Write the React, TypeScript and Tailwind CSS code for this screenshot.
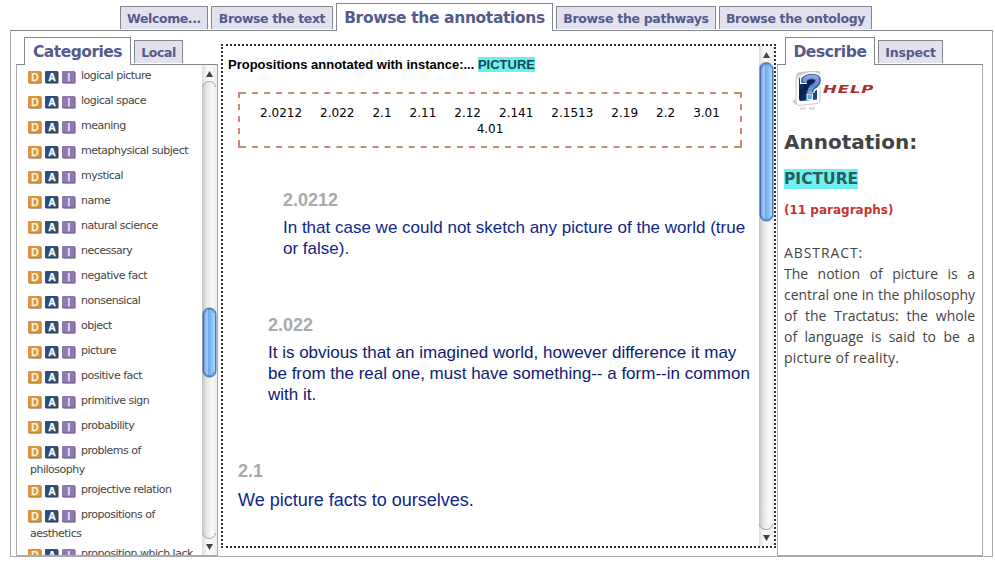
import type { ReactNode } from "react";

const verdana = "font-['Verdana','DejaVu_Sans',sans-serif]";
const arial = "font-['Liberation_Sans',Arial,sans-serif]";

type TabProps = { label: string; width: string; tracking: string; active?: boolean };

function Tab({ label, width, tracking, active }: TabProps) {
  return active ? (
    <button
      className={`relative -mb-px flex h-7 shrink-0 items-center justify-center border border-b-0 border-[#85858d] bg-white pt-[2px] text-[15.5px] font-bold whitespace-nowrap text-[#555a8c] ${width} ${tracking}`}
    >
      {label}
    </button>
  ) : (
    <button
      className={`mb-px flex h-[23px] shrink-0 items-center justify-center border border-b-0 border-[#85858d] bg-[#e2e2ef] pt-[3px] text-[12.5px] font-bold whitespace-nowrap text-[#555a8c] ${width} ${tracking}`}
    >
      {label}
    </button>
  );
}

const badges = [
  { letter: "D", fill: "#dc9442", shade: "#b97a35", ink: "#fff3c8", margin: "mr-[3px]" },
  { letter: "A", fill: "#304f79", shade: "#223b5e", ink: "#ffffff", margin: "mr-[3px]" },
  { letter: "I", fill: "#8f79b0", shade: "#6a5789", ink: "#e9e4f4", margin: "mr-[5px]" },
];

function Badges() {
  return (
    <span className="-ml-0.5 inline-flex translate-y-[2px]">
      {badges.map((b) => (
        <svg key={b.letter} className={`h-[13px] w-3.5 ${b.margin}`} viewBox="0 0 14 13">
          <rect x=".8" y=".8" width="13.2" height="12.2" rx="1.5" fill="#b9b9bd" />
          <rect x="0" y="0" width="13.2" height="12.2" rx="1.5" fill={b.shade} />
          <rect x="0" y="0" width="12.6" height="11.5" rx="1.5" fill={b.fill} />
          <text x="7.5" y="10.2" textAnchor="middle" fontFamily="Liberation Sans" fontSize="10.5" fontWeight="bold" fill={b.shade}>
            {b.letter}
          </text>
          <text x="6.8" y="9.6" textAnchor="middle" fontFamily="Liberation Sans" fontSize="10.5" fontWeight="bold" fill={b.ink} stroke={b.ink} strokeWidth=".25">
            {b.letter}
          </text>
        </svg>
      ))}
    </span>
  );
}

const categories: string[][] = [
  ["logical picture"],
  ["logical space"],
  ["meaning"],
  ["metaphysical subject"],
  ["mystical"],
  ["name"],
  ["natural science"],
  ["necessary"],
  ["negative fact"],
  ["nonsensical"],
  ["object"],
  ["picture"],
  ["positive fact"],
  ["primitive sign"],
  ["probability"],
  ["problems of", "philosophy"],
  ["projective relation"],
  ["propositions of", "aesthetics"],
  ["proposition which lack"],
];

function Scrollbar({ id, height, thumbTop, thumbHeight }: { id: string; height: number; thumbTop: number; thumbHeight: number }) {
  return (
    <svg className="shrink-0" width="15" height={height} viewBox={`0 0 15 ${height}`}>
      <defs>
        <linearGradient id={`${id}-track`}>
          <stop offset="0" stopColor="#c2c2c2" />
          <stop offset=".3" stopColor="#e6e6e6" />
          <stop offset=".7" stopColor="#fafafa" />
          <stop offset="1" stopColor="#ececec" />
        </linearGradient>
        <linearGradient id={`${id}-cap`}>
          <stop offset="0" stopColor="#dedede" />
          <stop offset=".4" stopColor="#fdfdfd" />
          <stop offset="1" stopColor="#efefef" />
        </linearGradient>
        <linearGradient id={`${id}-thumb`}>
          <stop offset="0" stopColor="#3c66b0" />
          <stop offset=".15" stopColor="#8bb7ef" />
          <stop offset=".33" stopColor="#a9ccf6" />
          <stop offset=".42" stopColor="#6ea9ea" />
          <stop offset=".7" stopColor="#8cc3f7" />
          <stop offset=".88" stopColor="#a5dbfb" />
          <stop offset="1" stopColor="#3d6aa3" />
        </linearGradient>
      </defs>
      <rect width="15" height={height} fill={`url(#${id}-cap)`} />
      <rect x="0" y="16" width="14.5" height={height - 32} rx="6.5" fill={`url(#${id}-track)`} />
      <path d="M.5 22c.5-3.500 3-5.500 6.500-5.500s6 2 6.500 5.500" fill="none" stroke="#a6a6a6" />
      <path d={`M.5 ${height - 22}c.5 3.500 3 5.500 6.500 5.500s6-2 6.500-5.500`} fill="none" stroke="#a6a6a6" />
      <rect x="1" y={thumbTop} width="13" height={thumbHeight} rx="6" fill={`url(#${id}-thumb)`} stroke="#3561a6" strokeWidth=".8" />
      <path d={`M2.500 ${thumbTop + 5}q1-4 5-4t5 4`} fill="none" stroke="#3f76c4" strokeOpacity=".6" strokeWidth="1.500" />
      <path d={`M2.500 ${thumbTop + thumbHeight - 5}q1 4 5 4t5-4`} fill="none" stroke="#3f76c4" strokeOpacity=".6" strokeWidth="1.500" />
      <path d="M7.500 6 11 12H4z" fill="#444" />
      <path d={`M7.500 ${height - 5}l3.500-6H4z`} fill="#444" />
    </svg>
  );
}

function Proposition({ number, className, children }: { number: string; className: string; children: ReactNode }) {
  return (
    <article className={className}>
      <h2 className="mb-[7px] text-lg leading-5 font-bold text-[#aaaaaa]">{number}</h2>
      {children}
    </article>
  );
}

const references = ["2.0212", "2.022", "2.1", "2.11", "2.12", "2.141", "2.1513", "2.19", "2.2", "3.01", "4.01"];

function DashedFrame() {
  return (
    <svg className="absolute inset-0" width="504" height="56" viewBox="0 0 504 56" fill="none" stroke="#cb8a75" strokeWidth="2">
      <path d="M2 1H502M2 55H502" strokeDasharray="6 6.05" />
      <path d="M1 0V56M503 0V56" strokeDasharray="6 6" />
      <path d="M0 55H2M502 55H504" />
    </svg>
  );
}

const abstractLines = [
  "The notion of picture is a",
  "central one in the philosophy",
  "of the Tractatus: the whole",
  "of language is said to be a",
];

function HelpIcon() {
  return (
    <svg className="h-[40px] w-[32px] shrink-0" viewBox="0 0 32 40">
      <defs>
        <linearGradient id="help-box" x1="0" y1="0" x2="1" y2="1">
          <stop offset="0" stopColor="#2a4a86" />
          <stop offset=".4" stopColor="#0c1f4a" />
          <stop offset="1" stopColor="#1b4d94" />
        </linearGradient>
        <linearGradient id="help-mark" x1="0" y1="0" x2="0" y2="1">
          <stop offset="0" stopColor="#8fa9dd" />
          <stop offset=".6" stopColor="#5b88cc" />
          <stop offset="1" stopColor="#57a9e6" />
        </linearGradient>
        <linearGradient id="help-frame" x1="0" y1="0" x2="0" y2="1">
          <stop offset="0" stopColor="#c4c4ca" />
          <stop offset=".3" stopColor="#f6f6f8" />
          <stop offset="1" stopColor="#ffffff" />
        </linearGradient>
      </defs>
      <path d="M0 30 4 28V34Z" fill="#d3d3d8" />
      <path d="M4 6Q4 2 8 1.500L25 0Q28 0 28 3V29Q28 32 25 32.500L7 34.500Q4 34.500 4 31Z" fill="url(#help-frame)" stroke="#bcbcc4" strokeWidth=".8" />
      <path d="M7 8Q7 6.500 9 6L25 4.500V28.500L9 30Q7 30 7 28Z" fill="url(#help-box)" />
      <path d="M11.500 13V7.500Q15 4.500 20 4.500 27 4.500 27 9.500 27 13.500 22 16.500 19 18 19 22" fill="none" stroke="#fff" strokeWidth="7" />
      <path d="M12 12V8.500Q15 5.500 20 5.500 26 5.500 26 9.500 26 13 21.500 15.500 18.500 17.500 18.500 21.500" fill="none" stroke="#2d559d" strokeWidth="5.500" />
      <path d="M12.500 11.500V8.500Q15.500 5.500 20 5.500 25.500 5.500 25.500 9.500 25.500 12.500 21.500 15 18 17.500 18 21" fill="none" stroke="url(#help-mark)" strokeWidth="3.800" />
      <rect x="15" y="23" width="5.500" height="5.500" fill="#4fb4ee" stroke="#e9f5ff" />
      <path d="M8 37.500h6M17 37.500h6" stroke="#bfc4cc" strokeWidth="2.500" strokeOpacity=".6" />
    </svg>
  );
}

export default function App() {
  return (
    <div className={`h-[566px] w-[995px] overflow-hidden bg-white ${verdana}`}>
      <nav className="flex h-[30px] items-end gap-[3px] pl-[120px]">
        <Tab label="Welcome..." width="w-[88px]" tracking="tracking-[-0.4px]" />
        <Tab label="Browse the text" width="w-[122px]" tracking="tracking-[-0.4px]" />
        <Tab label="Browse the annotations" width="w-[217px]" tracking="tracking-[-0.36px]" active />
        <Tab label="Browse the pathways" width="w-[160px]" tracking="tracking-[-0.3px]" />
        <Tab label="Browse the ontology" width="w-[153px]" tracking="tracking-[-0.35px]" />
      </nav>
      <main className="ml-[10px] flex h-[527px] w-[983px] border border-[#aaaaaa] border-t-[#85858d] pl-[5px]">
        <aside className="flex h-[525px] w-[202px] flex-col">
          <div className="flex h-[33px] items-end gap-[3px] pl-2">
            <Tab label="Categories" width="w-[107px]" tracking="tracking-[-0.5px]" active />
            <Tab label="Local" width="w-[49px]" tracking="tracking-[-0.4px]" />
          </div>
          <div className="flex h-[492px] overflow-hidden border border-[#aaaaaa] border-t-[#85858d]">
            <ul className="w-[185px] shrink-0 pt-px pl-[13px] text-[11px] text-[#444]">
              {categories.map((lines) => (
                <li key={lines[0]} className="mb-1.5 leading-[19px] tracking-[-0.5px] whitespace-nowrap">
                  <div className="flex h-[19px] items-center">
                    <Badges />
                    <span>{lines[0]}</span>
                  </div>
                  {lines[1] && <div className="-mb-[5px]">{lines[1]}</div>}
                </li>
              ))}
            </ul>
            <Scrollbar id="left" height={490} thumbTop={243} thumbHeight={69} />
          </div>
        </aside>

        <section className={`mt-[13px] ml-[3px] flex h-[504px] w-[555px] border-2 border-dotted border-[#333] ${arial}`}>
          <div className="h-[500px] w-[536px] shrink-0 overflow-hidden pl-[5px]">
            <h1 className="mt-[11px] text-[13px] leading-4 font-bold whitespace-nowrap text-black">
              Propositions annotated with instance:...{" "}
              <span className="bg-[#70efef] text-[#174b4b]">PICTURE</span>
            </h1>
            <div className={`relative mt-[19px] ml-[10px] flex h-[56px] w-[504px] flex-wrap content-start justify-center gap-x-[18px] px-4 pt-[13px] text-xs leading-4 text-black ${verdana}`}>
              <DashedFrame />
              {references.map((r) => (
                <span key={r}>{r}</span>
              ))}
            </div>
            <Proposition number="2.0212" className="mt-[42px] ml-[55px]">
              <p className="text-[17px] leading-[21px] whitespace-nowrap text-[#10258a]">
                In that case we could not sketch any picture of the world (true
                <br />
                or false).
              </p>
            </Proposition>
            <Proposition number="2.022" className="mt-[56px] ml-[40px]">
              <p className="text-[17px] leading-[21px] whitespace-nowrap text-[#0d1c72]">
                It is obvious that an imagined world, however difference it may
                <br />
                be from the real one, must have something-- a form--in common
                <br />
                with it.
              </p>
            </Proposition>
            <Proposition number="2.1" className="mt-[56px] ml-[10px]">
              <p className="text-lg leading-6 whitespace-nowrap text-[#10258a]">We picture facts to ourselves.</p>
            </Proposition>
          </div>
          <Scrollbar id="center" height={500} thumbTop={17} thumbHeight={158} />
        </section>

        <aside className="ml-px flex h-[525px] w-[206px] flex-col">
          <div className="flex h-[33px] items-end gap-[3px] pl-2">
            <Tab label="Describe" width="w-[90px]" tracking="tracking-[-0.4px]" active />
            <Tab label="Inspect" width="w-[65px]" tracking="tracking-[-0.2px]" />
          </div>
          <div className="h-[492px] overflow-hidden border border-[#aaaaaa] border-t-[#85858d] pl-[6px] text-[#444]">
            <div className="mt-[6px] ml-[8px] flex h-[40px]">
              <HelpIcon />
              <span className="mt-[11px] -ml-px origin-left scale-x-[1.5] text-[11px] leading-4 font-bold tracking-[0.6px] text-[#ab2f29] italic">HELP</span>
            </div>
            <h1 className="mt-[17px] text-[20px] leading-7 font-bold">Annotation:</h1>
            <div className="mt-[13px] flex h-5">
              <span className="bg-[#70f0ef] text-[15.5px] leading-5 font-bold text-[#2c5c5c]">PICTURE</span>
            </div>
            <p className="mt-[11px] text-xs leading-5 font-bold text-[#c23533]">(11 paragraphs)</p>
            <div className="mt-[22px] w-[191px] font-['Comic_Sans_MS','Open_Sans',sans-serif] text-sm leading-[21px] font-medium">
              <p className="tracking-[0.9px]">ABSTRACT:</p>
              {abstractLines.map((line) => (
                <p key={line} className="tracking-[-0.02px] whitespace-nowrap [text-align-last:justify]">{line}</p>
              ))}
              <p className="tracking-[0.25px]">picture of reality.</p>
            </div>
          </div>
        </aside>
      </main>
    </div>
  );
}
